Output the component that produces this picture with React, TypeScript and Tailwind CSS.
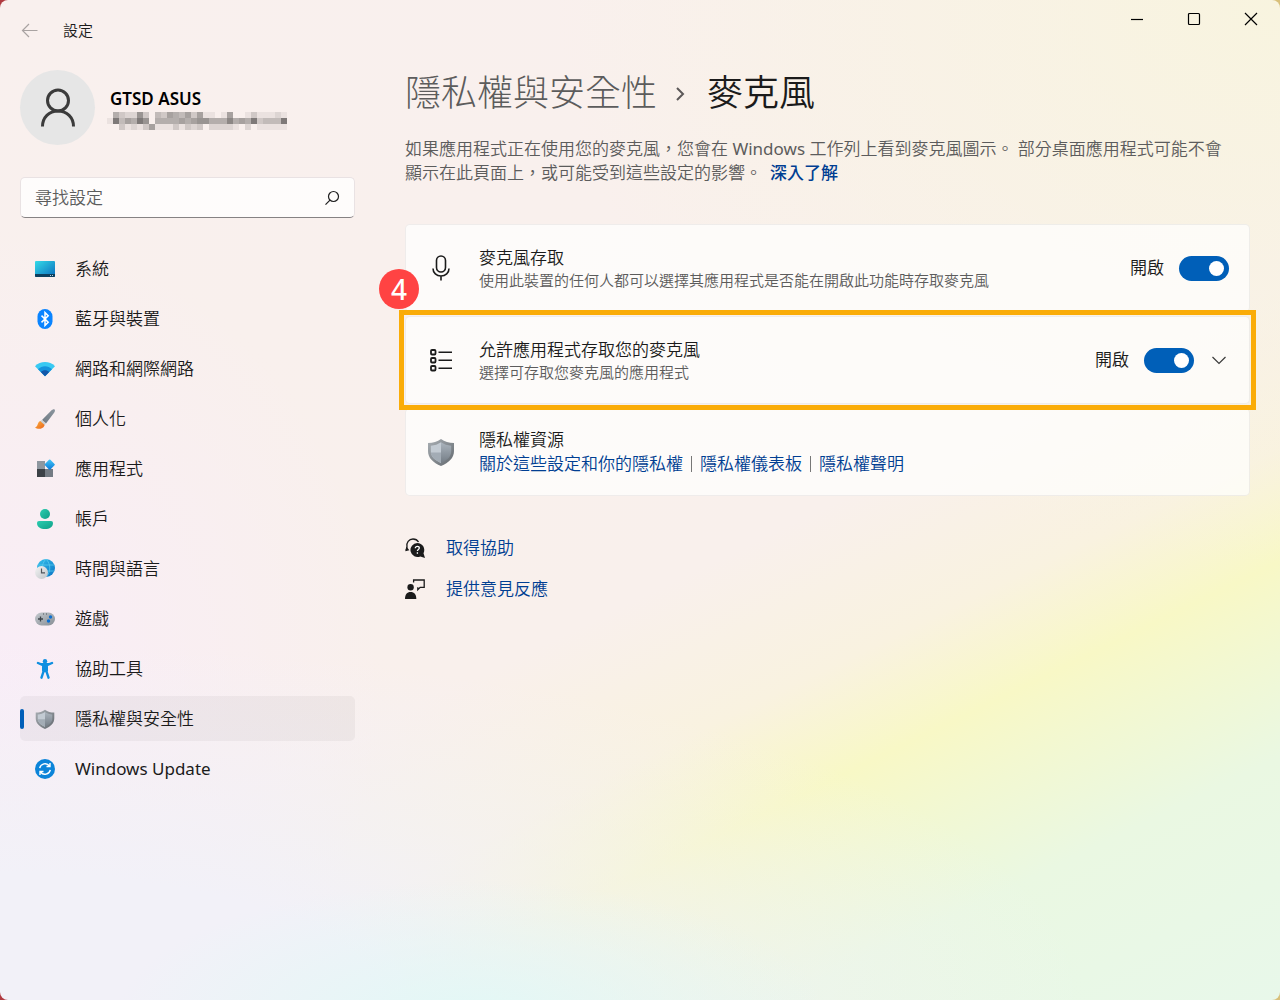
import type { ReactNode } from "react";
import clsx from "clsx";

type NavItem = {
  name: string;
  icon: ReactNode;
  active?: boolean;
};

// Darkness of each tile in the redacted account line, 0-9
const redactedRows = [
  "053227304365463611016001311121",
  "194659705555656775558565934449",
  "003121361113132302222102011111",
];

function ShieldIcon({ className }: { className?: string }) {
  return (
    <svg viewBox="0 0 28 28" className={className} aria-hidden="true">
      <defs>
        <linearGradient id="shield-rim" x1="0" y1="0" x2="1" y2="1">
          <stop offset="0" stopColor="#a9afb4" />
          <stop offset="1" stopColor="#62686e" />
        </linearGradient>
        <linearGradient id="shield-right" x1="0" y1="0" x2="0" y2="1">
          <stop offset="0" stopColor="#abb4bd" />
          <stop offset="1" stopColor="#747d86" />
        </linearGradient>
      </defs>
      <path d="M14 1c3.600 2.600 8 4 13 4v8c0 7-5 11.500-13 15C6 24.500 1 20 1 13V5c5 0 9.400-1.400 13-4Z" fill="url(#shield-rim)" />
      <path d="M14 4.200C11 6.200 7.600 7.400 3.800 7.700V13c0 5.400 3.700 9 10.200 12Z" fill="#c3cbd3" />
      <path d="M3.800 14.500H14V25C8 22.200 4.200 19 3.800 14.500Z" fill="#a3acb5" />
      <path d="M14 4.200c3 2 6.400 3.200 10.200 3.500V13c0 5.400-3.700 9-10.200 12Z" fill="url(#shield-right)" />
    </svg>
  );
}

function SystemIcon() {
  return (
    <svg viewBox="0 0 20 20" className="size-5" aria-hidden="true">
      <defs>
        <linearGradient id="system" x1="0" y1="0" x2="1" y2="1">
          <stop offset="0" stopColor="#34dbe8" />
          <stop offset="1" stopColor="#0a6cbd" />
        </linearGradient>
      </defs>
      <rect y="2" width="20" height="16" rx="1" fill="url(#system)" />
      <path d="M0 15h20v2a1 1 0 0 1-1 1H1a1 1 0 0 1-1-1Z" fill="#0c3f5e" />
      <path d="M15 16h1v1h-1zM17 16h1v1h-1z" fill="#b8d4e3" />
    </svg>
  );
}

function BluetoothIcon() {
  return (
    <svg viewBox="0 0 20 20" className="size-5" aria-hidden="true">
      <rect x="2.500" width="15" height="20" rx="7.500" fill="#0a84ff" />
      <path d="M6.500 6.600 13.200 13.300 10 16.400V3.600l3.200 3.100-6.700 6.700" fill="none" stroke="#fff" strokeWidth="1.500" />
    </svg>
  );
}

function NetworkIcon() {
  return (
    <svg viewBox="0 0 20 20" className="size-5" aria-hidden="true">
      <path d="M0 7.300C5.400 1.700 14.600 1.700 20 7.300L10 17.300Z" fill="#38c9f2" />
      <path d="M3 10.300c4-4 10-4 14 0l-7 7Z" fill="#1593dc" />
      <path d="M5.800 13.100c2.400-2.500 6-2.500 8.400 0L10 17.300Z" fill="#1257a8" />
    </svg>
  );
}

function BrushIcon() {
  return (
    <svg viewBox="0 0 20 20" className="size-5" aria-hidden="true">
      <defs>
        <linearGradient id="brush-handle" x1="1" y1="0" x2="0" y2="1">
          <stop offset="0" stopColor="#8b959e" />
          <stop offset="1" stopColor="#707a83" />
        </linearGradient>
        <linearGradient id="brush-tip" x1="0" y1="0" x2="1" y2="1">
          <stop offset="0" stopColor="#fbb040" />
          <stop offset="1" stopColor="#ea661c" />
        </linearGradient>
      </defs>
      <path d="M19.600.4c.8.9.2 2.300-.5 3.300L11 14.500 7 11 16.300 1.400c1-.9 2.400-1.700 3.300-1Z" fill="url(#brush-handle)" />
      <path d="M4.300 12.600c2-1.600 4.800-.6 5.300 1.600.6 3-2 5.500-5 5.600-1.800.1-3.600-.3-4.600-1.300 3-.6 2.200-4 4.300-5.900Z" fill="url(#brush-tip)" />
      <path d="m7 11 4 3.500-1.300 1.600-4.300-3.800Z" fill="#c9d0d6" />
    </svg>
  );
}

function AppsIcon() {
  return (
    <svg viewBox="0 0 20 20" className="size-5" aria-hidden="true">
      <defs>
        <linearGradient id="apps" x1="0" y1="0" x2="1" y2="1">
          <stop offset="0" stopColor="#45c8f7" />
          <stop offset="1" stopColor="#0877d8" />
        </linearGradient>
      </defs>
      <path d="M2 2h8v8H2z" fill="#8e979f" />
      <path d="M2 10h8v8H2z" fill="#3c4146" />
      <path d="M10 10h8v8h-8z" fill="#747b83" />
      <rect x="10.800" y="1.700" width="7.800" height="7.800" rx="1" transform="rotate(45 14.700 5.600)" fill="url(#apps)" />
    </svg>
  );
}

function AccountsIcon() {
  return (
    <svg viewBox="0 0 20 20" className="size-5" aria-hidden="true">
      <defs>
        <linearGradient id="accounts" x1="0" y1="0" x2="1" y2="1">
          <stop offset="0" stopColor="#2bcdb0" />
          <stop offset="1" stopColor="#109e87" />
        </linearGradient>
      </defs>
      <circle cx="10" cy="5" r="5" fill="url(#accounts)" />
      <path d="M4 12h12a2 2 0 0 1 2 2c0 4-3.500 6-8 6s-8-2-8-6a2 2 0 0 1 2-2Z" fill="url(#accounts)" />
    </svg>
  );
}

function TimeIcon() {
  return (
    <svg viewBox="0 0 20 20" className="size-5" aria-hidden="true">
      <defs>
        <linearGradient id="globe" x1="0" y1="0" x2="1" y2="1">
          <stop offset="0" stopColor="#35c1ec" />
          <stop offset="1" stopColor="#0b73c4" />
        </linearGradient>
        <linearGradient id="clock" x1="0" y1="0" x2="1" y2="1">
          <stop offset="0" stopColor="#f5f5f5" />
          <stop offset="1" stopColor="#bfc3c7" />
        </linearGradient>
      </defs>
      <circle cx="11" cy="9" r="9" fill="url(#globe)" />
      <path d="M3 6h16M3 12h16M11 0c-5 5-5 13 0 18 5-5 5-13 0-18" fill="none" stroke="#5ed0ef" strokeWidth=".7" />
      <circle cx="6.500" cy="13.500" r="6.500" fill="url(#clock)" />
      <path d="M6.500 9.500v4.300H10" fill="none" stroke="#50565c" strokeWidth="1.200" />
    </svg>
  );
}

function GamingIcon() {
  return (
    <svg viewBox="0 0 20 20" className="size-5" aria-hidden="true">
      <defs>
        <linearGradient id="gamepad" x1="0" y1="0" x2="1" y2="1">
          <stop offset="0" stopColor="#c4c9ce" />
          <stop offset="1" stopColor="#878e95" />
        </linearGradient>
      </defs>
      <rect y="3.500" width="20" height="13" rx="6.500" fill="url(#gamepad)" />
      <path d="M5.500 7.500v5M3 10h5" stroke="#3f454b" strokeWidth="1.300" />
      <circle cx="15.500" cy="8" r="1.700" fill="#0d6fd0" />
      <circle cx="13.500" cy="12" r="1.700" fill="#0d6fd0" />
      <path d="M8 4.500h1v1H8zM11 4.500h1v1h-1z" fill="#50565c" />
    </svg>
  );
}

function AccessibilityIcon() {
  return (
    <svg viewBox="0 0 20 20" className="size-5" aria-hidden="true">
      <circle cx="10" cy="2.200" r="2.200" fill="#0f8fe0" />
      <path
        d="M3 4 8 6.200h4L17 4M8.200 6.500h3.600v5.500H8.200ZM9 11l-2.500 7.700M11 11l2.500 7.700"
        fill="#0f8fe0"
        stroke="#0f8fe0"
        strokeWidth="2.400"
        strokeLinecap="round"
        strokeLinejoin="round"
      />
    </svg>
  );
}

function UpdateIcon() {
  return (
    <svg viewBox="0 0 20 20" className="size-5" aria-hidden="true">
      <circle cx="10" cy="10" r="10" fill="#0b84d9" />
      <path
        d="M4.700 9.200A5.500 5.500 0 0 1 14.500 7M15.300 10.800A5.500 5.500 0 0 1 5.500 13M15 4v3.500h-3.500M5 16v-3.500h3.500"
        fill="none"
        stroke="#fff"
        strokeWidth="1.400"
      />
    </svg>
  );
}

const navItems: NavItem[] = [
  { name: "系統", icon: <SystemIcon /> },
  { name: "藍牙與裝置", icon: <BluetoothIcon /> },
  { name: "網路和網際網路", icon: <NetworkIcon /> },
  { name: "個人化", icon: <BrushIcon /> },
  { name: "應用程式", icon: <AppsIcon /> },
  { name: "帳戶", icon: <AccountsIcon /> },
  { name: "時間與語言", icon: <TimeIcon /> },
  { name: "遊戲", icon: <GamingIcon /> },
  { name: "協助工具", icon: <AccessibilityIcon /> },
  { name: "隱私權與安全性", icon: <ShieldIcon className="size-5" />, active: true },
  { name: "Windows Update", icon: <UpdateIcon /> },
];

function TitleBar() {
  return (
    <header className="flex items-start justify-between pr-px">
      <div className="flex items-center gap-[23px] pt-5 pl-5">
        <button type="button" aria-label="返回" className="text-[#a9a3a2]">
          <svg viewBox="0 0 20 20" className="size-5" fill="none" stroke="currentColor" strokeWidth="1.200" aria-hidden="true">
            <path d="M17.500 10.500H2.800M9 4l-6.500 6.500L9 17" />
          </svg>
        </button>
        <span className="text-[15px] leading-5">設定</span>
      </div>
      <div className="flex text-black">
        <button type="button" aria-label="最小化" className="flex h-[38px] w-[57px] items-center justify-center">
          <svg viewBox="0 0 14 14" className="size-3.5" fill="none" stroke="currentColor" strokeWidth="1.200" aria-hidden="true">
            <path d="M1 7.500h12" />
          </svg>
        </button>
        <button type="button" aria-label="最大化" className="flex h-[38px] w-[57px] items-center justify-center">
          <svg viewBox="0 0 14 14" className="size-3.5" fill="none" stroke="currentColor" strokeWidth="1.200" aria-hidden="true">
            <rect x="1.500" y="1.500" width="11" height="11" rx="1" />
          </svg>
        </button>
        <button type="button" aria-label="關閉" className="flex h-[38px] w-[57px] items-center justify-center">
          <svg viewBox="0 0 14 14" className="size-3.5" fill="none" stroke="currentColor" strokeWidth="1.200" aria-hidden="true">
            <path d="m1 1 12 12M13 1 1 13" />
          </svg>
        </button>
      </div>
    </header>
  );
}

function Sidebar() {
  return (
    <aside className="w-[335px] shrink-0">
      <div className="flex items-center gap-3">
        <div className="flex size-[75px] items-center justify-center rounded-full bg-[#e6e6e6]">
          <svg viewBox="0 0 36 40" className="h-10 w-9" fill="none" stroke="#3b3b3b" strokeWidth="3" aria-hidden="true">
            <circle cx="18" cy="12.500" r="10.500" />
            <path d="M2.500 38.500c0-9 6.500-15.500 15.500-15.500s15.500 6.500 15.500 15.500" />
          </svg>
        </div>
        <div>
          <p className="pl-[3px] text-[17px] leading-[26px] font-semibold text-black">GTSD ASUS</p>
          <div aria-hidden="true">
            {redactedRows.map((row, y) => (
              <div key={y} className="flex">
                {row.split("").map((level, x) => (
                  <span key={x} className="size-1.5 bg-black" style={{ opacity: Number(level) * 0.055 }} />
                ))}
              </div>
            ))}
          </div>
        </div>
      </div>

      <label className="mt-8 flex h-[41px] items-center rounded-[5px] border border-b-[#868283] border-[#e9e2e3] bg-white/80 px-3.5">
        <input
          type="search"
          aria-label="尋找設定"
          placeholder="尋找設定"
          className="min-w-0 flex-1 bg-transparent outline-none placeholder:text-[#5c5c5c]"
        />
        <svg viewBox="0 0 16 16" className="size-4" fill="none" stroke="#1f1f1f" strokeWidth="1.200" aria-hidden="true">
          <circle cx="9.500" cy="6.500" r="5" />
          <path d="M6 10.200 1.500 14.700" />
        </svg>
      </label>

      <nav className="mt-7 flex flex-col gap-[5px]">
        {navItems.map((item) => (
          <a
            key={item.name}
            href="#"
            aria-current={item.active ? "page" : undefined}
            className={clsx(
              "relative flex h-[45px] items-center gap-5 rounded-[5px] pl-[15px] last:font-normal",
              item.active && "bg-black/4"
            )}
          >
            {item.active && <span className="absolute left-0 h-5 w-1 rounded-full bg-[#005fb8]" />}
            {item.icon}
            <span>{item.name}</span>
          </a>
        ))}
      </nav>
    </aside>
  );
}

function Toggle({ label }: { label: string }) {
  return (
    <label className="flex items-center gap-[15px]">
      <span>開啟</span>
      <input
        type="checkbox"
        role="switch"
        aria-label={label}
        defaultChecked
        className="h-[25px] w-[50px] appearance-none rounded-full bg-[#8a8a8a] p-[5px] before:block before:size-[15px] before:rounded-full before:bg-white checked:bg-[#005fb8] checked:before:ml-auto"
      />
    </label>
  );
}

function SettingCard({
  icon,
  title,
  description,
  children,
}: {
  icon: ReactNode;
  title: string;
  description: ReactNode;
  children?: ReactNode;
}) {
  return (
    <section className="flex min-h-[88px] items-center rounded-[5px] border border-black/6 bg-white/70 px-5">
      <div className="flex w-[53px] shrink-0 pl-px">{icon}</div>
      <div className="min-w-0 flex-1">
        <h2 className="leading-6">{title}</h2>
        {description}
      </div>
      {children}
    </section>
  );
}

export default function App() {
  return (
    <div className="bg-[linear-gradient(90deg,#b03a40,#d8c07a)]">
      <div
        lang="zh-Hant"
        className="min-h-screen rounded-lg bg-[#f9f0ed] bg-[radial-gradient(ellipse_at_100%_0%,#f8f4df,#f8f4df00_40%),radial-gradient(ellipse_28%_14%_at_37%_102%,#e2f8f6,#e2f8f600),radial-gradient(ellipse_85%_36%_at_0%_100%,#f2f1f8_35%,#f2f1f800),radial-gradient(ellipse_30%_45%_at_0%_68%,#f9edf7,#f9edf700),linear-gradient(154deg,#f9f0ee_0%,#f9f0ec_56%,#f9f2e0_66%,#f8f8c6_73%,#f2f8d2_78%,#eaf8e2_85%,#e8f8ea_100%)] pb-10 font-['Noto_Sans','Noto_Sans_CJK_TC',sans-serif] text-[17px] leading-6 font-[350] text-[#1b1b1b]"
      >
        <TitleBar />
        <div className="flex gap-[50px] pt-[30px] pr-[30px] pl-5">
          <Sidebar />
          <main className="min-w-0 flex-1">
            <h1 className="flex items-center gap-[18px] text-[36px] leading-[46px] font-light">
              <span className="text-[#5c5c5c]">隱私權與安全性</span>
              <svg viewBox="0 0 14 16" className="mt-0.5 h-4 w-3.5" fill="none" stroke="#5c5858" strokeWidth="2" aria-hidden="true">
                <path d="m2 2 6 6-6 6" />
              </svg>
              <span className="font-[350]">麥克風</span>
            </h1>
            <p className="mt-[21px] pr-3 text-[#5c5c5c]">
              如果應用程式正在使用您的麥克風，您會在 <span className="font-normal">Windows</span> 工作列上看到麥克風圖示。 部分桌面應用程式可能不會顯示在此頁面上，或可能受到這些設定的影響。
              <a href="#" className="ml-2 font-medium text-[#003e92]">
                深入了解
              </a>
            </p>

            <div className="mt-[39px] flex flex-col gap-1">
              <SettingCard
                title="麥克風存取"
                icon={
                  <svg viewBox="0 0 28 28" className="size-7" fill="none" stroke="#1b1b1b" strokeWidth="1.600" aria-hidden="true">
                    <rect x="9.500" y="2" width="9" height="16" rx="4.500" />
                    <path d="M6 14.500c0 4.500 3.500 7.500 8 7.500s8-3 8-7.500M14 22v4.500" />
                  </svg>
                }
                description={
                  <p className="text-[15px] leading-5 text-[#5c5c5c]">
                    使用此裝置的任何人都可以選擇其應用程式是否能在開啟此功能時存取麥克風
                  </p>
                }
              >
                <Toggle label="麥克風存取" />
              </SettingCard>

              <div className="relative">
                <SettingCard
                  title="允許應用程式存取您的麥克風"
                  icon={
                    <svg viewBox="0 0 28 28" className="size-7" fill="none" stroke="#1b1b1b" strokeWidth="1.800" aria-hidden="true">
                      <rect x="4" y="4" width="4.500" height="4.500" rx="1" />
                      <rect x="4" y="12" width="4.500" height="4.500" rx="1" />
                      <rect x="4" y="20" width="4.500" height="4.500" rx="1" />
                      <path d="M11.500 6.300H25M11.500 14.300H25M11.500 22.300H25" strokeWidth="1.500" />
                    </svg>
                  }
                  description={<p className="text-[15px] leading-5 text-[#5c5c5c]">選擇可存取您麥克風的應用程式</p>}
                >
                  <Toggle label="允許應用程式存取您的麥克風" />
                  <button type="button" aria-label="展開" className="mr-0.5 ml-[17px]">
                    <svg viewBox="0 0 16 16" className="size-4" fill="none" stroke="#3a3a3a" strokeWidth="1.200" aria-hidden="true">
                      <path d="m1.500 5 6.500 6.500L14.500 5" />
                    </svg>
                  </button>
                </SettingCard>
                <div className="pointer-events-none absolute -inset-1.5 border-[5px] border-[#faac08]" />
                <span className="absolute -top-[47px] -left-[26px] flex size-10 items-center justify-center rounded-full bg-[#ff4343] text-[28px] font-medium text-white">
                  4
                </span>
              </div>

              <SettingCard
                title="隱私權資源"
                icon={<ShieldIcon className="size-7" />}
                description={
                  <p className="flex flex-wrap items-center gap-2 text-[#003e92]">
                    <a href="#">關於這些設定和你的隱私權</a>
                    <span className="h-4 w-px bg-[#777]" />
                    <a href="#">隱私權儀表板</a>
                    <span className="h-4 w-px bg-[#777]" />
                    <a href="#">隱私權聲明</a>
                  </p>
                }
              />
            </div>

            <div className="mt-10 flex flex-col gap-[17px] text-[#003e92]">
              <a href="#" className="flex items-center gap-[21px]">
                <svg viewBox="0 0 20 20" className="size-5" fill="none" aria-hidden="true">
                  <path d="M1 12.500 2 9C1 4.500 4 1 8 1c2.500 0 4.500 1.200 5.500 3" stroke="#1b1b1b" strokeWidth="1.300" />
                  <path d="M.3 13.300 1.500 8.500l2.800 3.700Z" fill="#1b1b1b" />
                  <path d="M12.300 5a7 7 0 0 1 6.200 10.200L20 20l-4.700-1.600A7 7 0 1 1 12.300 5Z" fill="#1b1b1b" />
                  <path d="M10.300 10.300c0-1.200.9-1.900 2-1.900s2 .7 2 1.700c0 1.500-1.900 1.500-1.900 3M12.400 14.300v1.400" stroke="#fff" strokeWidth="1.300" />
                </svg>
                取得協助
              </a>
              <a href="#" className="flex items-center gap-[21px]">
                <svg viewBox="0 0 20 20" className="size-5" fill="none" aria-hidden="true">
                  <path d="M8.600 3.500V1h10.600v7.300h-4l-2.400 2.400V8.300" stroke="#1b1b1b" strokeWidth="1.300" />
                  <circle cx="5.600" cy="8.300" r="3.200" fill="#1b1b1b" />
                  <path d="M0 20c0-4.500 2-7 5.600-7s5.700 2.500 5.700 7Z" fill="#1b1b1b" />
                </svg>
                提供意見反應
              </a>
            </div>
          </main>
        </div>
      </div>
    </div>
  );
}
